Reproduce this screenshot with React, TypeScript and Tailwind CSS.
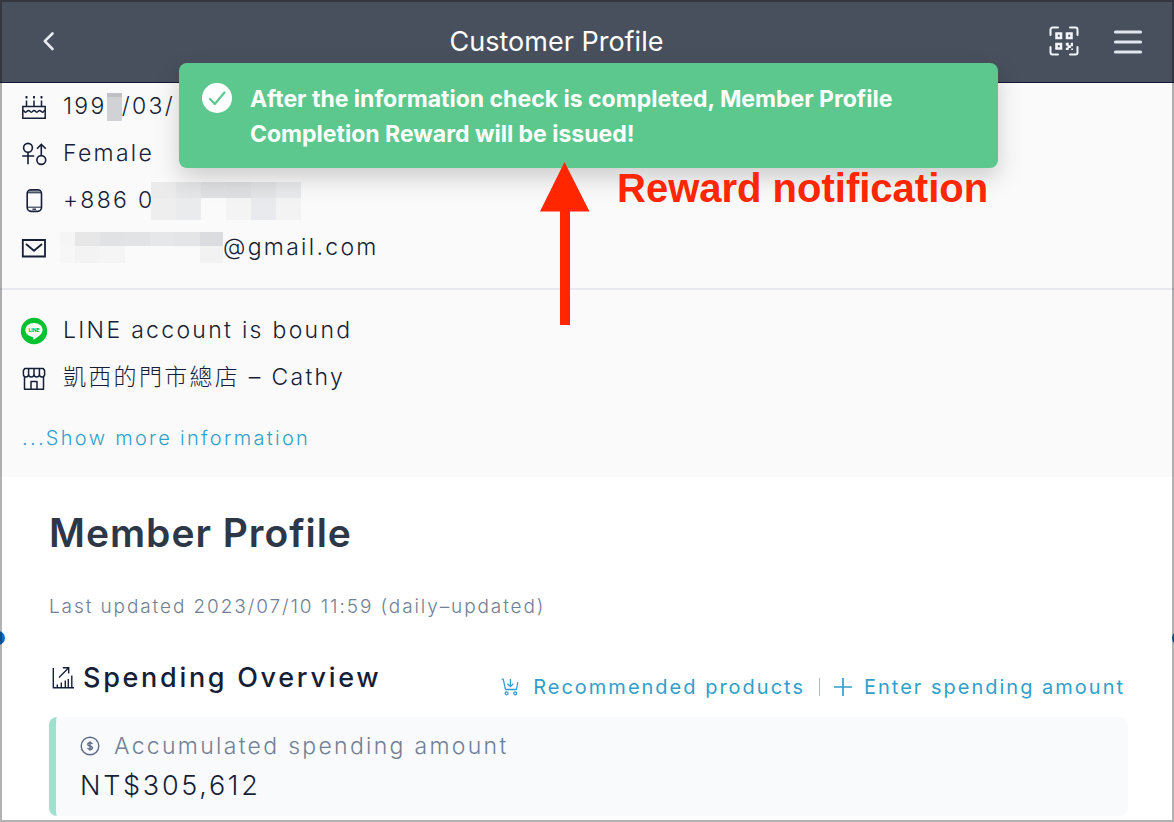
import React from "react";

type IconProps = { className?: string };

function BackIcon() {
  return (
    <svg width="16" height="24" viewBox="0 0 16 24" fill="none" stroke="#e8edf3" strokeWidth="2.6" strokeLinecap="round" strokeLinejoin="round" aria-hidden="true">
      <path d="M12.500 4.500 4.800 12.200 12.500 20" />
    </svg>
  );
}

function QrIcon() {
  return (
    <svg width="30" height="30" viewBox="0 0 30 30" fill="none" stroke="#f1f5f9" aria-hidden="true">
      <path d="M1.500 9V3.500a2 2 0 0 1 2-2H9M21 1.500h5.500a2 2 0 0 1 2 2V9M28.500 21v5.500a2 2 0 0 1-2 2H21M9 28.500H3.500a2 2 0 0 1-2-2V21" strokeWidth="2" strokeLinecap="round" />
      <path d="M7.500 7.500h4.500v4.500H7.500zM18 7.500h4.500v4.500H18zM7.500 18h4.500v4.500H7.500z" strokeWidth="2.600" />
      <path d="M16.800 16.800h3v2.500h2v-2.500h2.200v3.400h-2v1.800h-2.200v2h-3v-2.200h1.600v-2h-1.600zM22.200 22.400H24V24h-1.800z" fill="#f1f5f9" stroke="none" />
    </svg>
  );
}

function MenuIcon() {
  return (
    <svg width="30" height="28" viewBox="0 0 30 28" stroke="#dfe6ee" strokeWidth="3.200" strokeLinecap="round" aria-hidden="true">
      <path d="M2.500 5h25M2.500 15h25M2.500 25h25" />
    </svg>
  );
}

function CheckIcon() {
  return (
    <svg width="30" height="30" viewBox="0 0 30 30" className="shrink-0" aria-hidden="true">
      <circle cx="15" cy="15" r="15" fill="#fff" />
      <path d="m8 16 4.800 5L22.500 9.500" fill="none" stroke="#5cc88d" strokeWidth="2.200" strokeLinecap="round" strokeLinejoin="round" />
    </svg>
  );
}

function CakeIcon() {
  return (
    <svg width="28" height="28" viewBox="0 0 28 28" fill="none" stroke="#161e38" strokeWidth="1.500" aria-hidden="true">
      <path d="M2.800 13.500h22.400v11.700H2.800zM6.500 7.500v6M14 7.500v6M21.500 7.500v6" />
      <path d="M3 17.500c1.200 0 1.300 1.700 2.700 1.700s1.400-1.700 2.800-1.700 1.400 1.700 2.800 1.700 1.300-1.700 2.700-1.700 1.400 1.700 2.800 1.700 1.400-1.700 2.800-1.700 1.400 1.700 2.800 1.700 1.400-1.700 2.600-1.700" />
      <path d="M6.500 3v2.400M14 3v2.400M21.500 3v2.400" strokeWidth="1.900" />
    </svg>
  );
}

function GenderIcon() {
  return (
    <svg width="28" height="28" viewBox="0 0 28 28" fill="none" stroke="#161e38" strokeWidth="1.600" aria-hidden="true">
      <circle cx="8" cy="7.800" r="4.400" />
      <path d="M8 12.200v12M2.200 16h12M21.300 15.800V4.600M17 8.800l4.300-4.500 4.500 4.500" />
      <circle cx="21.300" cy="20" r="4.400" />
    </svg>
  );
}

function PhoneIcon() {
  return (
    <svg width="28" height="28" viewBox="0 0 28 28" fill="none" stroke="#161e38" strokeWidth="1.600" aria-hidden="true">
      <path d="M8 5.500a3 3 0 0 1 3-2.500h6.500a3 3 0 0 1 3 2.500z" fill="#8b8f9b" stroke="none" />
      <rect x="7.200" y="2.800" width="14.300" height="21.600" rx="3.800" />
      <path d="M7.200 5.800h14.300M7.200 20.200h14.300" strokeWidth="1" />
      <path d="M12.500 22.200h3.500" strokeWidth="1.300" />
    </svg>
  );
}

function MailIcon() {
  return (
    <svg width="28" height="28" viewBox="0 0 28 28" fill="none" stroke="#161e38" strokeWidth="1.800" aria-hidden="true">
      <path d="M2.800 6h22.200v16.500H2.800z" />
      <path d="m6 10 8 6.800 8-6.800" />
    </svg>
  );
}

function LineIcon() {
  return (
    <svg width="28" height="28" viewBox="0 0 28 28" className="tracking-normal" aria-hidden="true">
      <circle cx="14" cy="14" r="13.200" fill="#06c130" />
      <path d="M14 6c-4.900 0-8.600 3.100-8.600 7 0 3.500 3 6.300 7.300 6.900 1 .2.600 1 .5 2.100 0 .5.400.600.900.300 2.600-1.500 8.500-4.900 8.500-9.300 0-3.900-3.700-7-8.600-7z" fill="#fff" />
      <text x="14" y="15" textAnchor="middle" fontSize="5" fontWeight="800" fill="#06c130" fontFamily="Inter, sans-serif">LINE</text>
    </svg>
  );
}

function StoreIcon() {
  return (
    <svg width="28" height="28" viewBox="0 0 28 28" fill="none" stroke="#161e38" strokeWidth="1.500" strokeLinejoin="round" aria-hidden="true">
      <path d="M4.800 4.500h18.400l1.400 2v3.800a2.600 2.600 0 0 1-5.200 0 2.700 2.700 0 0 1-5.400 0 2.700 2.700 0 0 1-5.400 0 2.600 2.600 0 0 1-5.200 0V6.500zM8.600 4.500v5.800M14 4.500v5.800M19.400 4.500v5.800" />
      <path d="M4.500 13v12.200h19V13M11 25.200v-7.700h6v7.700" />
    </svg>
  );
}

function ChartIcon() {
  return (
    <svg width="24" height="24" viewBox="0 0 24 24" fill="none" stroke="#161e38" strokeWidth="1.400" aria-hidden="true">
      <path d="M2.300 2v19.800H23M6.300 22v-3.500M10.300 22v-5.500M14.300 22v-7.500M17.300 22v-9M20.800 22V9.500" />
      <path d="M8 11.500l9.500-9.500M11.800 1.700h5.900v5.800" />
    </svg>
  );
}

function CartIcon() {
  return (
    <svg width="18" height="18" viewBox="0 0 18 18" fill="none" stroke="#319fc9" strokeWidth="1.300" strokeLinejoin="round" aria-hidden="true">
      <path d="M.6 1.200h1.600L4.500 11.500h11L16.800 4M9.400 1v7.500M6.500 5.800l2.900 2.800 2.900-2.800" />
      <circle cx="5.600" cy="15.300" r="1.500" />
      <circle cx="14.200" cy="15.300" r="1.500" />
    </svg>
  );
}

function PlusIcon() {
  return (
    <svg width="18" height="18" viewBox="0 0 18 18" stroke="#319fc9" strokeWidth="1.700" aria-hidden="true">
      <path d="M9 0v18M0 9h18" />
    </svg>
  );
}

function DollarIcon() {
  return (
    <svg width="20" height="20" viewBox="0 0 20 20" fill="none" stroke="#5d6b88" strokeWidth="1.400" aria-hidden="true">
      <circle cx="10" cy="10" r="8.800" />
      <path d="M12.300 8c-.3-.8-1.100-1.300-2.300-1.300s-2.200.6-2.200 1.700c0 2.300 4.600 1 4.600 3.400 0 1-1 1.600-2.300 1.600s-2.200-.5-2.500-1.500M10 5.200v9.600" />
    </svg>
  );
}

type Cell = [number, number, number, number, string];

function Mosaic({ width, height, cells, className }: { width: number; height: number; cells: Cell[] } & IconProps) {
  return (
    <svg width={width} height={height} className={className} shapeRendering="crispEdges" aria-hidden="true">
      {cells.map(([x, y, w, h, fill]) => (
        <rect key={`${x}-${y}`} x={x} y={y} width={w} height={h} fill={fill} />
      ))}
    </svg>
  );
}

const yearCells: Cell[] = [
  [0, 0, 15, 4, "#c0c1c5"],
  [0, 4, 15, 24, "#d0d2d6"],
];

const phoneCells: Cell[] = [
  [0, 0, 25, 16, "#ebebec"],
  [25, 0, 25, 16, "#e5e6e7"],
  [50, 0, 25, 16, "#e0e1e3"],
  [75, 0, 25, 16, "#dfe0e2"],
  [100, 0, 25, 16, "#e3e4e6"],
  [125, 0, 25, 16, "#e9eaeb"],
  [0, 16, 25, 22, "#eeeeef"],
  [25, 16, 25, 22, "#e9ebed"],
  [75, 16, 25, 22, "#f4f4f5"],
  [100, 16, 25, 22, "#e8eaed"],
  [125, 16, 25, 22, "#f3f3f4"],
];

const mailCells: Cell[] = [
  [0, 0, 15, 14, "#f5f5f5"],
  [15, 0, 25, 14, "#e7e7e8"],
  [40, 0, 25, 14, "#e1e2e3"],
  [65, 0, 25, 14, "#e2e3e4"],
  [90, 0, 25, 14, "#e6e7e8"],
  [115, 0, 25, 14, "#e4e5e7"],
  [140, 0, 23, 14, "#dbdcdf"],
  [0, 14, 15, 17, "#f7f7f7"],
  [15, 14, 25, 17, "#f3f3f3"],
  [40, 14, 25, 17, "#f5f5f5"],
  [140, 14, 23, 17, "#f2f2f3"],
];

function InfoRow({ icon, children }: { icon: React.ReactNode; children: React.ReactNode }) {
  return (
    <li className="flex h-[47px] items-center gap-[15px]">
      <span className="shrink-0">{icon}</span>
      <span className="flex items-center whitespace-pre">{children}</span>
    </li>
  );
}

export default function App() {
  return (
    <div className="relative min-h-screen overflow-hidden bg-white font-['Inter','Noto_Sans_CJK_TC',sans-serif] font-light text-[#161e38]">
      <header className="flex h-[83px] items-center border-b border-[#12173a] bg-[#48505e] pr-[31px] pl-10">
        <button type="button" aria-label="Back" className="flex w-9 shrink-0">
          <BackIcon />
        </button>
        <h1 className="flex-1 pt-[2px] text-center text-[27px] leading-9 font-normal text-white">Customer Profile</h1>
        <div className="flex shrink-0 items-center gap-[34px] pl-3">
          <button type="button" aria-label="Scan QR code">
            <QrIcon />
          </button>
          <button type="button" aria-label="Menu">
            <MenuIcon />
          </button>
        </div>
      </header>

      <section className="bg-[#fafafa] text-[23px] tracking-widest">
        <ul className="border-b-2 border-[#e8e9ec] pb-[17px] pl-5">
          <InfoRow icon={<CakeIcon />}>
            199
            <Mosaic width={15} height={28} cells={yearCells} />
            /03/
          </InfoRow>
          <InfoRow icon={<GenderIcon />}>Female</InfoRow>
          <InfoRow icon={<PhoneIcon />}>
            +886 0
            <Mosaic width={150} height={38} cells={phoneCells} className="-ml-[3px]" />
          </InfoRow>
          <InfoRow icon={<MailIcon />}>
            <Mosaic width={163} height={31} cells={mailCells} className="-ml-[3px]" />
            @gmail.com
          </InfoRow>
        </ul>
        <ul className="pt-[17px] pl-5">
          <InfoRow icon={<LineIcon />}>LINE account is bound</InfoRow>
          <InfoRow icon={<StoreIcon />}>凱西的門市總店 – Cathy</InfoRow>
        </ul>
        <div className="flex h-[76px] items-center pb-[2px] pl-[22px] text-xl">
          <a href="#more" className="text-[#319fc9]">...Show more information</a>
        </div>
      </section>

      <main className="pt-8 pr-[46px] pb-1 pl-[49px]">
        <h2 className="text-[39px] leading-[48px] font-semibold tracking-wide text-[#2d3748]">Member Profile</h2>
        <p className="mt-9 text-[19px] leading-7 tracking-widest text-[#718096]">Last updated 2023/07/10 11:59 (daily–updated)</p>
        <div className="mt-[37px] flex items-end justify-between pr-[3px]">
          <h3 className="flex items-center gap-2 pl-[2px] text-[27px] leading-10 font-medium tracking-widest">
            <ChartIcon />
            Spending Overview
          </h3>
          <div className="flex items-center text-xl leading-[22px] font-normal tracking-widest text-[#319fc9]">
            <a href="#products" className="flex items-center gap-[14px]">
              <CartIcon />
              Recommended products
            </a>
            <span className="mx-[14px] h-[18px] w-px bg-[#b4b8c2]" />
            <a href="#amount" className="flex items-center gap-3">
              <PlusIcon />
              Enter spending amount
            </a>
          </div>
        </div>
        <div className="mt-[19px] rounded-lg border-l-[7px] border-[#9fe0cf] bg-[#f8fafc] pt-3 pb-2 pl-6">
          <div className="flex items-center gap-[14px] text-[23px] leading-[34px] tracking-widest text-[#718096]">
            <DollarIcon />
            Accumulated spending amount
          </div>
          <div className="text-[27px] leading-[45px] tracking-widest">NT$305,612</div>
        </div>
      </main>

      <div role="status" className="absolute top-[63px] right-[176px] left-[179px] flex gap-[18px] rounded-lg bg-[#5cc88d] px-[23px] pt-[19px] pb-4 text-[23px] leading-[35px] font-bold text-white shadow-[0_10px_24px_rgba(0,0,0,0.18)]">
        <span className="pt-px">
          <CheckIcon />
        </span>
        <p>
          After the information check is completed, Member Profile
          <br />
          Completion Reward will be issued!
        </p>
      </div>

      <svg width="50" height="163" viewBox="0 0 50 163" fill="#ff2600" className="absolute top-[162px] left-[540px]" aria-hidden="true">
        <path d="M24.500 0 49.500 49.500H30V163H20V49.500H0z" />
      </svg>
      <p className="absolute top-[165px] left-[617px] font-['Liberation_Sans',Arial,sans-serif] text-[40px] leading-[46px] font-bold whitespace-nowrap text-[#ff2600]">
        Reward notification
      </p>

      <span className="absolute top-[631px] -left-[9px] size-[14px] rounded-full bg-[#0f6cc4]" />
      <span className="absolute top-[631px] -right-[12px] size-[14px] rounded-full bg-[#0f6cc4]" />
      <div className="pointer-events-none absolute inset-0 border-2 border-black/30" />
    </div>
  );
}
